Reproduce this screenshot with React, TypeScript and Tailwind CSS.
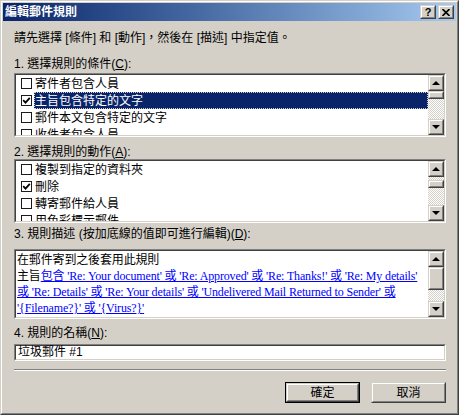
import React from "react";
import { clsx } from "clsx";

type BoxProps = { className?: string; children?: React.ReactNode };

// raised 3D edge, classic Windows style
function Raised({ className, children }: BoxProps) {
  return (
    <div className={clsx("border border-t-[#d4d0c8] border-l-[#d4d0c8] border-r-[#404040] border-b-[#404040] bg-[#d4d0c8]", className)}>
      <div className="flex h-full w-full items-center justify-center border border-t-white border-l-white border-r-[#808080] border-b-[#808080]">
        {children}
      </div>
    </div>
  );
}

// sunken field edge
function Sunken({ className, children }: BoxProps) {
  return (
    <div className={clsx("border border-t-[#808080] border-l-[#808080] border-r-white border-b-white", className)}>
      <div className="flex h-full w-full border border-t-[#404040] border-l-[#404040] border-r-[#d4d0c8] border-b-[#d4d0c8] bg-white">
        {children}
      </div>
    </div>
  );
}

const ArrowUp = () => (
  <div className="h-0 w-0 border-r-[4px] border-b-[4px] border-l-[4px] border-r-transparent border-b-black border-l-transparent" />
);
const ArrowDown = () => (
  <div className="h-0 w-0 border-t-[4px] border-r-[4px] border-l-[4px] border-t-black border-r-transparent border-l-transparent" />
);

function ScrollBar({ thumb, gap }: { thumb: string; gap: string }) {
  return (
    <div className="flex w-[16px] shrink-0 flex-col">
      <Raised className="h-[16px] w-[16px]">
        <ArrowUp />
      </Raised>
      <div className="flex flex-1 flex-col bg-[repeating-conic-gradient(#d4d0c8_0%_25%,#ffffff_0%_50%)] bg-[length:2px_2px]">
        <Raised className={clsx("w-[16px]", thumb, gap)} />
      </div>
      <Raised className="h-[16px] w-[16px]">
        <ArrowDown />
      </Raised>
    </div>
  );
}

function Check({ checked }: { checked?: boolean }) {
  return (
    <div className="flex h-[11px] w-[11px] shrink-0 items-center justify-center border border-[#1a1a1a] bg-white">
      {checked && (
        <svg width="9" height="9" viewBox="0 0 9 9">
          <path d="M1.2 4.2 L3.5 6.6 L7.8 1.8" fill="none" stroke="#000" strokeWidth="1.8" />
        </svg>
      )}
    </div>
  );
}

type Item = { label: string; checked?: boolean; selected?: boolean };

function CheckList({ items, thumbGap }: { items: Item[]; thumbGap: string }) {
  return (
    <Sunken className="h-[64px] w-full">
      <div className="flex-1 overflow-hidden">
        {items.map((it) => (
          <div key={it.label} className="flex h-[17px] items-center pl-[5px]">
            <Check checked={it.checked} />
            <span
              className={clsx(
                "ml-[2px] flex h-[17px] flex-1 items-center pl-[1px] whitespace-nowrap",
                it.selected && "bg-[#0a246a] text-white outline outline-1 outline-dotted outline-[#d4d0c8] -outline-offset-1"
              )}
            >
              {it.label}
            </span>
          </div>
        ))}
      </div>
      <ScrollBar thumb="h-[8px]" gap={thumbGap} />
    </Sunken>
  );
}

const conditions: Item[] = [
  { label: "寄件者包含人員" },
  { label: "主旨包含特定的文字", checked: true, selected: true },
  { label: "郵件本文包含特定的文字" },
  { label: "收件者包含人員" },
];

const actions: Item[] = [
  { label: "複製到指定的資料夾" },
  { label: "刪除", checked: true },
  { label: "轉寄郵件給人員" },
  { label: "用色彩標示郵件" },
];

export default function App() {
  return (
    <div className="h-[415px] w-[459px] border border-t-[#d4d0c8] border-l-[#d4d0c8] border-r-[#404040] border-b-[#404040] bg-[#d4d0c8] font-['Liberation_Sans','Noto_Sans_CJK_TC',sans-serif] text-[12px] text-black">
      <div className="flex h-full flex-col border border-t-white border-l-white border-r-[#808080] border-b-[#808080] p-[1px]">
        {/* title bar */}
        <div className="flex h-[18px] items-center bg-gradient-to-r from-[#0a246a] to-[#a6caf0] pr-[2px] pl-[2px]">
          <span className="flex-1 text-[12px] leading-[18px] font-bold text-white">編輯郵件規則</span>
          <Raised className="h-[14px] w-[16px]">
            <span className="font-['Liberation_Sans',sans-serif] text-[11px] leading-none font-bold">?</span>
          </Raised>
          <Raised className="ml-[2px] h-[14px] w-[16px]">
            <svg width="8" height="7" viewBox="0 0 8 7">
              <path d="M0.5 0 L7.5 7 M7.5 0 L0.5 7" stroke="#000" strokeWidth="1.6" />
            </svg>
          </Raised>
        </div>

        <div className="flex flex-1 flex-col pr-[10px] pl-[11px]">
          <p className="mt-[9px] leading-[16px] whitespace-nowrap">請先選擇 [條件] 和 [動作]，然後在 [描述] 中指定值。</p>

          <p className="mt-[11px] leading-[14px]">
            1. 選擇規則的條件(<span className="underline">C</span>):
          </p>
          <div className="mt-[2px]">
            <CheckList items={conditions} thumbGap="mt-0" />
          </div>

          <p className="mt-[8px] leading-[14px]">
            2. 選擇規則的動作(<span className="underline">A</span>):
          </p>
          <div className="mt-0">
            <CheckList items={actions} thumbGap="mt-[3px]" />
          </div>

          <p className="mt-[4px] leading-[14px] whitespace-nowrap">
            3. 規則描述 (按加底線的值即可進行編輯)(<span className="underline">D</span>):
          </p>
          <Sunken className="mt-[8px] h-[70px] w-full">
            <div className="flex-1 overflow-hidden pt-[1px] pl-[1px] font-['Liberation_Serif','Noto_Sans_CJK_TC',serif] text-[12px] leading-[16px] tracking-[-0.15px] whitespace-nowrap">
              <div>在郵件寄到之後套用此規則</div>
              <div>
                主旨
                <span className="text-[#0000ff] underline">包含 'Re: Your document' 或 'Re: Approved' 或 'Re: Thanks!' 或 'Re: My details'</span>
              </div>
              <div className="text-[#0000ff] underline">或 'Re: Details' 或 'Re: Your details' 或 'Undelivered Mail Returned to Sender' 或</div>
              <div>
                <span className="text-[#0000ff] underline">'{"{"}Filename?{"}"}' 或 '{"{"}Virus?{"}"}'</span>
              </div>
              <div className="h-[4px] overflow-hidden">刪除</div>
            </div>
            <ScrollBar thumb="h-[23px]" gap="mt-0" />
          </Sunken>

          <p className="mt-[7px] leading-[14px]">
            4. 規則的名稱(<span className="underline">N</span>):
          </p>
          <Sunken className="mt-[4px] h-[17px] w-full">
            <div className="flex items-center pl-[2px] leading-[13px]">垃圾郵件 #1</div>
          </Sunken>

          <div className="mt-[8px] border-t border-b border-t-[#808080] border-b-white" />

          <div className="mt-[11px] flex justify-end gap-[11px]">
            <div className="border border-black">
              <Raised className="h-[19px] w-[73px]">
                <span className="text-[12px] leading-none">確定</span>
              </Raised>
            </div>
            <Raised className="h-[21px] w-[75px]">
              <span className="text-[12px] leading-none">取消</span>
            </Raised>
          </div>
        </div>
      </div>
    </div>
  );
}
